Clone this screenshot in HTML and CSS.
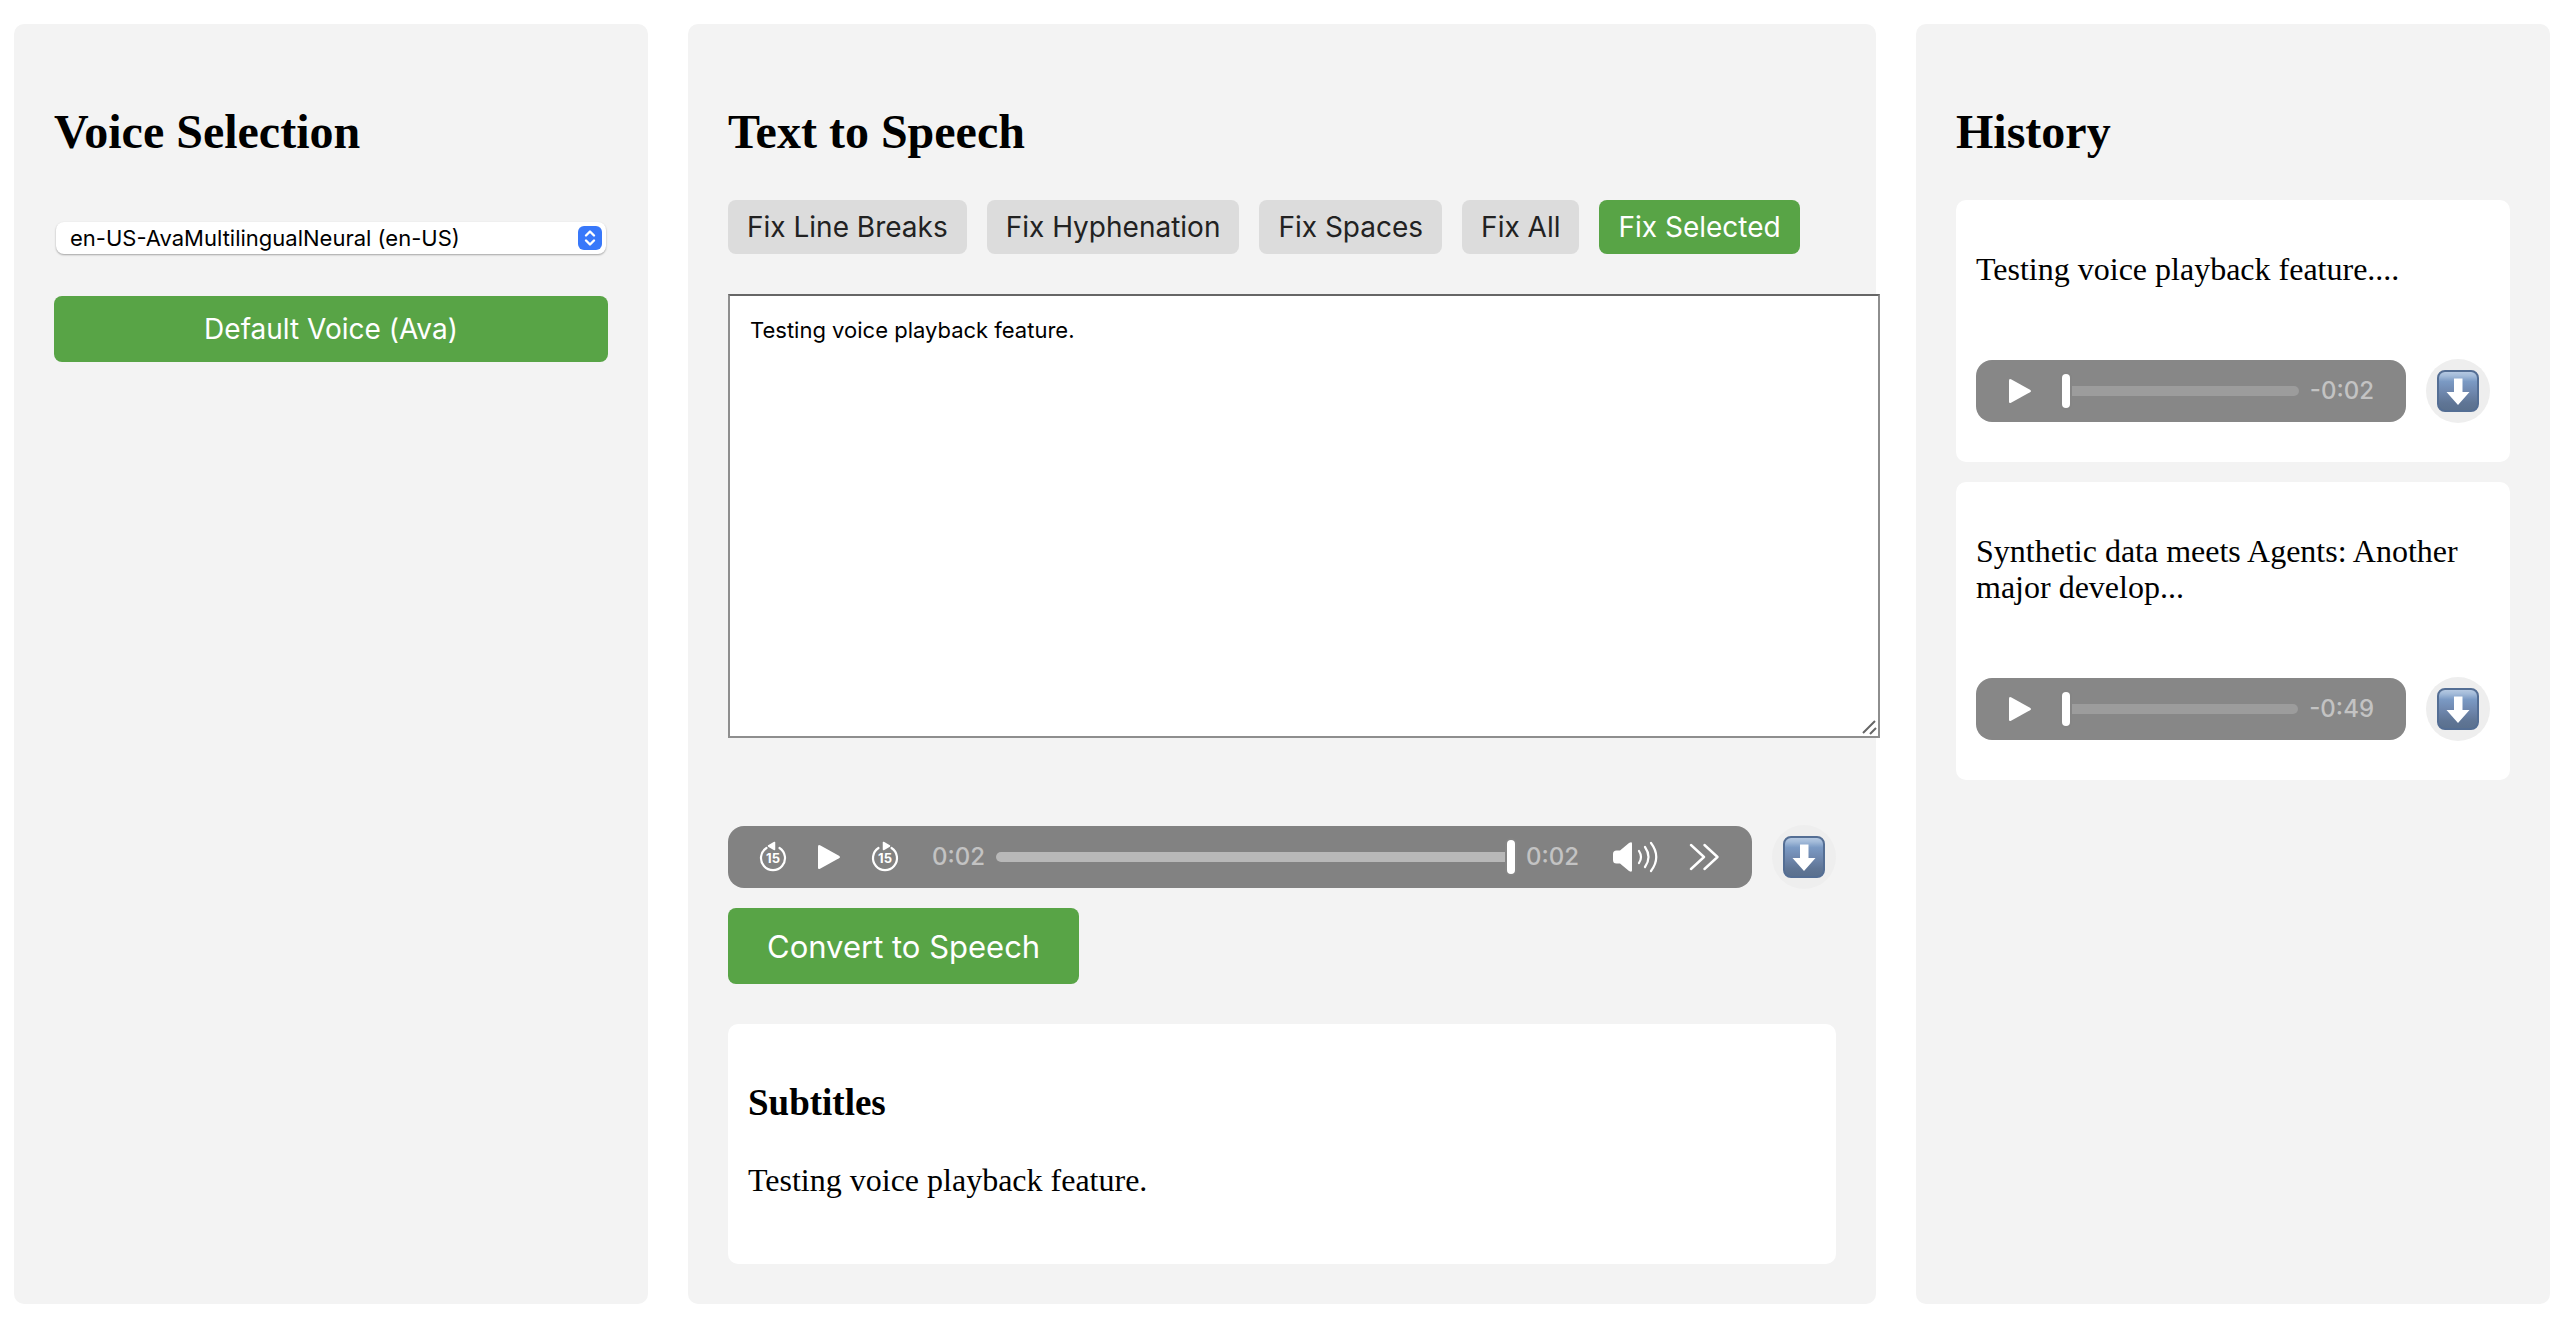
FILE: index.html
```html
<!DOCTYPE html>
<html lang="en">
<head>
<meta charset="utf-8">
<title>Text to Speech</title>
<link rel="stylesheet" href="styles.css">
</head>
<body>
<svg width="0" height="0" class="defs" aria-hidden="true">
  <defs>
    <linearGradient id="key-face" x1="0" y1="0" x2="0" y2="1">
      <stop offset="0" stop-color="#b9cce4"/>
      <stop offset="0.12" stop-color="#a3bbd9"/>
      <stop offset="0.26" stop-color="#7b9ac4"/>
      <stop offset="0.5" stop-color="#7089b0"/>
      <stop offset="0.8" stop-color="#5f7595"/>
      <stop offset="1" stop-color="#5a708d"/>
    </linearGradient>
  </defs>
  <symbol id="download" viewBox="0 0 42 42">
    <rect x="1" y="1" width="40" height="40" rx="7" fill="url(#key-face)" stroke="#546e94" stroke-width="2"/>
    <path d="M17 8.500h8.500v13.500h7L21 35 9.500 22H17z" fill="#fff"/>
  </symbol>
  <symbol id="play" viewBox="0 0 24 26">
    <path d="M1 2.500Q1 .3 3 1.300L22 11.700q2 1.300 0 2.600L3 24.700q-2 1-2-1.200z" fill="#fff"/>
  </symbol>
</svg>
<main class="layout">
  <section class="panel">
    <h2>Voice Selection</h2>
    <div class="select-wrap">
      <select aria-label="Voice"><option>en-US-AvaMultilingualNeural (en-US)</option></select>
      <svg class="select-arrows" viewBox="0 0 24 24" aria-hidden="true">
        <rect width="24" height="24" rx="6" fill="#3878fa"/>
        <path d="M8 9.500l4-4 4 4M8 14.500l4 4 4-4" fill="none" stroke="#fff" stroke-width="2.400" stroke-linecap="round" stroke-linejoin="round"/>
      </svg>
    </div>
    <button class="default-voice">Default Voice (Ava)</button>
  </section>

  <section class="panel panel-main">
    <h2>Text to Speech</h2>
    <div class="tools">
      <button>Fix Line Breaks</button>
      <button>Fix Hyphenation</button>
      <button>Fix Spaces</button>
      <button>Fix All</button>
      <button class="selected">Fix Selected</button>
    </div>
    <div class="editor">
      <textarea aria-label="Text to convert" spellcheck="false">Testing voice playback feature.</textarea>
      <svg class="grip" viewBox="0 0 16 16" aria-hidden="true"><path d="M2 14L14 2M9 15l6-6" stroke="#666" stroke-width="2"/></svg>
    </div>
    <div class="audio-row">
      <div class="player player-full">
        <button class="control" aria-label="Back 15 seconds">
          <svg width="28" height="32" viewBox="0 0 28 32">
            <path d="M7.500 7A12 12 0 1 0 20.500 7" fill="none" stroke="#fff" stroke-width="2.200" stroke-linecap="round"/>
            <path d="M9.500 5l6-3.500v7z" fill="#fff" stroke="#fff" stroke-width="1.500" stroke-linejoin="round"/>
            <text x="14" y="22" class="skip-label">15</text>
          </svg>
        </button>
        <button class="control" aria-label="Play"><svg width="24" height="26"><use href="#play"/></svg></button>
        <button class="control" aria-label="Forward 15 seconds">
          <svg width="28" height="32" viewBox="0 0 28 32">
            <path d="M7.500 7A12 12 0 1 0 20.500 7" fill="none" stroke="#fff" stroke-width="2.200" stroke-linecap="round"/>
            <path d="M18.500 5l-6-3.500v7z" fill="#fff" stroke="#fff" stroke-width="1.500" stroke-linejoin="round"/>
            <text x="14" y="22" class="skip-label">15</text>
          </svg>
        </button>
        <div class="scrub">
          <span class="time">0:02</span>
          <input type="range" min="0" max="2" value="2" aria-label="Position">
          <span class="time">0:02</span>
        </div>
        <button class="control" aria-label="Mute">
          <svg width="46" height="32" viewBox="0 0 46 32">
            <path d="M0 13q0-3.500 3.500-3.500H7L16 2q3-1.500 3 .5v27q0 2-3 .5L7 22.500H3.500Q0 22.500 0 19z" fill="#fff"/>
            <path d="M26 10q4 6 0 12M32 6q7 10 0 20M38 2q10.500 14 0 28" fill="none" stroke="#fff" stroke-width="2.200" stroke-linecap="round"/>
          </svg>
        </button>
        <button class="control" aria-label="More controls">
          <svg width="30" height="28" viewBox="0 0 30 28"><path d="M2 2l13 12L2 26M15.500 2l13 12-13 12" fill="none" stroke="#fff" stroke-width="2.400" stroke-linecap="round" stroke-linejoin="round"/></svg>
        </button>
      </div>
      <a class="download" href="#" aria-label="Download"><svg width="42" height="42"><use href="#download"/></svg></a>
    </div>
    <button class="convert">Convert to Speech</button>
    <div class="card subtitles">
      <h3>Subtitles</h3>
      <p>Testing voice playback feature.</p>
    </div>
  </section>

  <section class="panel">
    <h2>History</h2>
    <div class="history">
      <article class="card">
        <p>Testing voice playback feature....</p>
        <div class="audio-row">
          <div class="player">
            <button class="control" aria-label="Play"><svg width="24" height="26"><use href="#play"/></svg></button>
            <div class="scrub">
              <input type="range" min="0" max="2" value="0" aria-label="Position">
              <span class="time">-0:02</span>
            </div>
          </div>
          <a class="download" href="#" aria-label="Download"><svg width="42" height="42"><use href="#download"/></svg></a>
        </div>
      </article>
      <article class="card">
        <p>Synthetic data meets Agents: Another major develop...</p>
        <div class="audio-row">
          <div class="player">
            <button class="control" aria-label="Play"><svg width="24" height="26"><use href="#play"/></svg></button>
            <div class="scrub">
              <input type="range" min="0" max="49" value="0" aria-label="Position">
              <span class="time">-0:49</span>
            </div>
          </div>
          <a class="download" href="#" aria-label="Download"><svg width="42" height="42"><use href="#download"/></svg></a>
        </div>
      </article>
    </div>
  </section>
</main>
</body>
</html>
```
FILE: styles.css
```css
body {
  margin: 24px 18px 14px 14px;
  background: #fff;
  color: #000;
  font: 32px/36px "Liberation Serif", "Times New Roman", serif;
}

.defs {
  position: absolute;
}

.layout {
  display: flex;
  gap: 40px;
}

.panel {
  flex: 1;
  min-width: 0;
  padding: 40px;
  border-radius: 10px;
  background: #f3f3f3;
}

.panel-main {
  flex: 2;
}

h2 {
  margin: 40px 0;
  font-size: 48px;
  line-height: 56px;
}

h3 {
  margin: 38px 0;
  font-size: 37px;
  line-height: 42px;
}

p {
  margin: 31px 0;
}

button,
select,
textarea {
  font-family: Inter, "Liberation Sans", sans-serif;
}

button {
  border: 0;
  border-radius: 8px;
  background: #58a446;
  color: #fff;
}

.select-wrap {
  position: relative;
  display: flex;
  margin: 62px 2px 42px;
}

select {
  appearance: none;
  flex: 1;
  height: 32px;
  padding: 0 40px 0 14px;
  border: 0;
  border-radius: 8px;
  background: #fff;
  box-shadow: 0 1px 2px #00000055;
  color: #000;
  font-size: 22px;
}

.select-arrows {
  position: absolute;
  top: 4px;
  right: 4px;
  width: 24px;
  height: 24px;
  pointer-events: none;
}

.default-voice {
  width: 100%;
  height: 66px;
  font-size: 28px;
}

.tools {
  display: flex;
  gap: 20px;
}

.tools button {
  height: 54px;
  padding: 0 19px;
  background: #dcdcdc;
  color: #222;
  font-size: 28px;
}

.tools .selected {
  background: #58a446;
  color: #fff;
}

.editor {
  position: relative;
  display: flex;
  margin: 40px -44px 88px 0;
}

textarea {
  flex: 1;
  box-sizing: border-box;
  height: 444px;
  padding: 20px;
  border: 2px solid #8e8e8e;
  border-top-color: #666;
  background: #fff;
  color: #000;
  font-size: 22px;
  line-height: 28px;
  resize: none;
}

.grip {
  position: absolute;
  right: 3px;
  bottom: 3px;
  width: 16px;
  height: 16px;
}

.audio-row {
  display: flex;
  align-items: center;
  gap: 20px;
  height: 62px;
}

.player {
  display: flex;
  flex: 1;
  align-items: center;
  gap: 30px;
  box-sizing: border-box;
  min-width: 0;
  height: 62px;
  padding: 0 32px;
  border-radius: 16px;
  background: #878787;
}

.player-full {
  padding: 0 33px 0 31px;
  background: #828282;
}

.control {
  display: flex;
  padding: 0;
  background: none;
}

.skip-label {
  fill: #fff;
  font: 700 13px Inter, "Liberation Sans", sans-serif;
  text-anchor: middle;
}

.scrub {
  display: flex;
  flex: 1;
  align-items: center;
  gap: 11px;
  min-width: 0;
}

.player-full .scrub {
  margin: 0 4px 0 3px;
}

.time {
  color: #c3c3c3;
  font: 500 24px/28px Inter, "Liberation Sans", sans-serif;
}

input[type="range"] {
  appearance: none;
  flex: 1;
  min-width: 0;
  height: 34px;
  margin: 0;
  background: none;
}

input[type="range"]::-webkit-slider-runnable-track {
  height: 10px;
  border-radius: 5px;
  background: #9c9c9c;
}

.player-full input[type="range"]::-webkit-slider-runnable-track {
  background: #b8b8b8;
}

input[type="range"]::-webkit-slider-thumb {
  appearance: none;
  width: 8px;
  height: 34px;
  margin-top: -12px;
  border-radius: 4px;
  background: #fff;
  box-shadow: 0 0 0 2px #858585;
}

.download {
  display: flex;
  flex: none;
  align-items: center;
  justify-content: center;
  width: 64px;
  height: 64px;
  border-radius: 50%;
  background: #eee;
}

.convert {
  display: block;
  height: 76px;
  margin: 20px 0 40px;
  padding: 0 39px;
  font-size: 31px;
}

.card {
  display: flow-root;
  padding: 20px;
  border-radius: 10px;
  background: #fff;
}

.card .audio-row {
  margin: 73px 0 20px;
}

.subtitles {
  box-sizing: border-box;
  min-height: 240px;
}

.history {
  display: grid;
  gap: 20px;
}
```
